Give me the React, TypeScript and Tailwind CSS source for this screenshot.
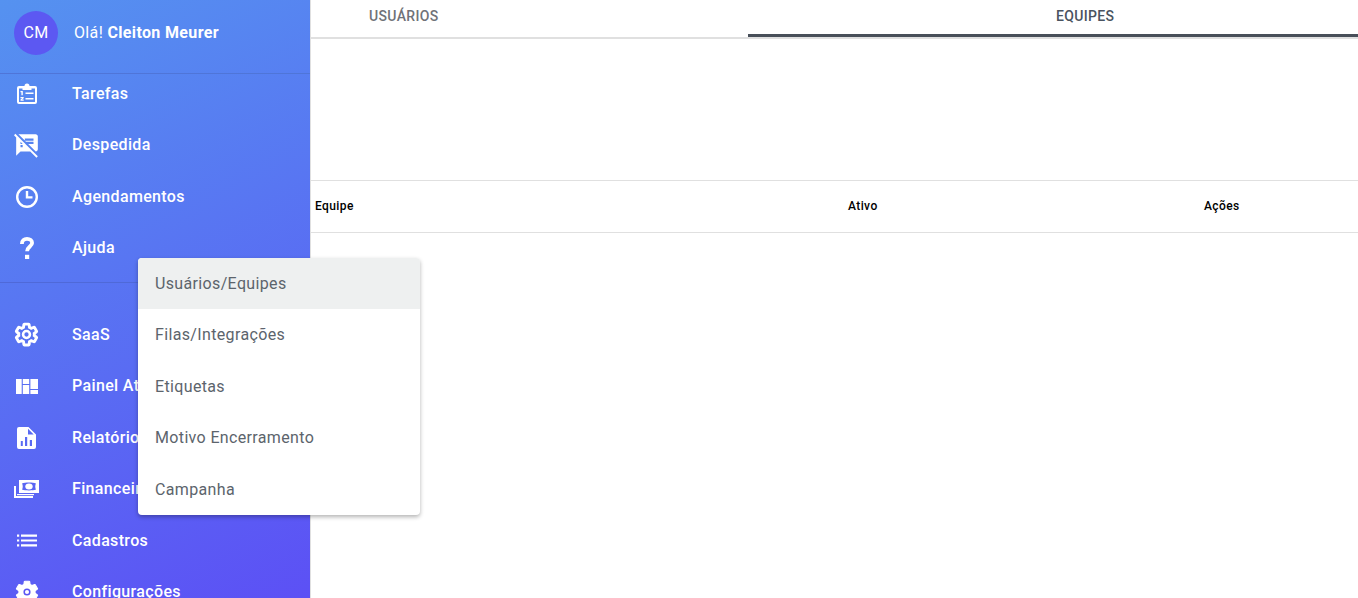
import type { ReactNode } from "react";
import { MdSpeakerNotesOff } from "react-icons/md";

const GEAR =
  "M19.43 12.98c.04-.32.07-.64.07-.98 0-.34-.03-.66-.07-.98l2.11-1.65c.19-.15.24-.42.12-.64l-2-3.46c-.09-.16-.26-.25-.44-.25-.06 0-.12.01-.17.03l-2.49 1c-.52-.4-1.08-.73-1.69-.98l-.38-2.65C14.46 2.18 14.25 2 14 2h-4c-.25 0-.46.18-.49.42l-.38 2.65c-.61.25-1.17.59-1.69.98l-2.49-1c-.06-.02-.12-.03-.18-.03-.17 0-.34.09-.43.25l-2 3.46c-.13.22-.07.49.12.64l2.11 1.65c-.04.32-.07.65-.07.98 0 .33.03.66.07.98l-2.11 1.65c-.19.15-.24.42-.12.64l2 3.46c.09.16.26.25.44.25.06 0 .12-.01.17-.03l2.49-1c.52.4 1.08.73 1.69.98l.38 2.65c.03.24.24.42.49.42h4c.25 0 .46-.18.49-.42l.38-2.65c.61-.25 1.17-.59 1.69-.98l2.49 1c.06.02.12.03.18.03.17 0 .34-.09.43-.25l2-3.46c.12-.22.07-.49-.12-.64l-2.11-1.65z";

function TasksIcon() {
  return (
    <svg viewBox="0 0 20 21" width="20" height="21" fill="#fff">
      <path
        fillRule="evenodd"
        d="M2 3h5.500a2.500 2.500 0 0 1 5 0H18a2 2 0 0 1 2 2v14a2 2 0 0 1-2 2H2a2 2 0 0 1-2-2V5a2 2 0 0 1 2-2Zm0 2.500V18.500a.5.5 0 0 0 .5.5h15a.5.5 0 0 0 .5-.5V5.500h-3.500V7h-9V5.500H2Z"
      />
      <path d="M3.500 8h2.300v4.200H4.400V9.300H3.500ZM8.500 9.500h8v1.600h-8ZM3.500 14h3.200v1.200l-1.700 1.300h1.700v1.300H3.500v-1.200l1.800-1.400H3.500ZM8.500 15h8v1.600h-8Z" />
    </svg>
  );
}

function ClockIcon() {
  return (
    <svg viewBox="0 0 22 22" width="22" height="22" fill="none" stroke="#fff" strokeWidth="2.4">
      <circle cx="11" cy="11" r="9.800" />
      <path d="M11 5v6.400h5.500" />
    </svg>
  );
}

function QuestionIcon() {
  return (
    <svg viewBox="0 0 14 22" width="14" height="22">
      <path
        d="M1.900 7C1.900 3.500 4 1.900 7 1.900c3.100 0 5.100 1.700 5.100 4.200 0 3.400-5 3.600-5 8.100"
        fill="none"
        stroke="#fff"
        strokeWidth="3.800"
      />
      <path d="M5 17.800h4.200V22H5z" fill="#fff" />
    </svg>
  );
}

function GearOutlineIcon() {
  return (
    <svg viewBox="0 0 24 24" width="25" height="25" fill="none" stroke="#fff">
      <path d={GEAR} strokeWidth="2.800" />
      <circle cx="12" cy="12" r="3.300" strokeWidth="2.500" />
    </svg>
  );
}

function GearSolidIcon() {
  return (
    <svg viewBox="0 0 24 24" width="26" height="26">
      <path d={GEAR} fill="#fff" stroke="#fff" strokeWidth="1" />
      <circle cx="12" cy="12" r="2.600" fill="none" stroke="#5b55f3" strokeWidth="1.400" />
    </svg>
  );
}

function QuiltIcon() {
  return (
    <svg viewBox="0 0 22 15" width="22" height="15" fill="#fff">
      <path d="M0 0h5.700v15H0zM6.800 0h6.400v5H6.800zM6.800 6h6.400v9H6.800zM14.400 0H22v10h-7.600zM14.400 11H22v4h-7.600z" />
    </svg>
  );
}

function ReportIcon() {
  return (
    <svg viewBox="0 0 19 22" width="19" height="22">
      <path
        fillRule="evenodd"
        fill="#fff"
        d="M2 0h9.500L19 7.500V20a2 2 0 0 1-2 2H2a2 2 0 0 1-2-2V2a2 2 0 0 1 2-2ZM11 1.800V7.500h5.700ZM3.800 14v5h2v-5ZM8 10v9h2.200v-9ZM12.800 13v6h2.200v-6Z"
      />
    </svg>
  );
}

function MoneyIcon() {
  return (
    <svg viewBox="0 0 25 18" width="25" height="18" fill="#fff">
      <path
        fillRule="evenodd"
        d="M5 0h20v13H5ZM8 3.500C9 5 9 8 8 9.500c3 1.200 11 1.200 14 0-1-1.500-1-4.500 0-6-3-1.200-11-1.200-14 0Z"
      />
      <ellipse cx="15" cy="6.500" rx="3.700" ry="3" />
      <path d="M0 6h2v10h17v2H0Z" />
      <path d="M3 14h17v1.200H3Z" />
    </svg>
  );
}

function ListIcon() {
  return (
    <svg viewBox="0 0 20 13" width="20" height="13" fill="#fff">
      <path d="M0 .5h2.200v2.200H0zM4 .5h16v2.200H4zM0 5.400h2.200v2.200H0zM4 5.400h16v2.200H4zM0 10.300h2.200v2.200H0zM4 10.300h16v2.200H4z" />
    </svg>
  );
}

const TOP_ITEMS: { label: string; icon: ReactNode }[] = [
  { label: "Tarefas", icon: <TasksIcon /> },
  { label: "Despedida", icon: <MdSpeakerNotesOff size={26} color="#fff" /> },
  { label: "Agendamentos", icon: <ClockIcon /> },
  { label: "Ajuda", icon: <QuestionIcon /> },
];

const BOTTOM_ITEMS: { label: string; icon: ReactNode }[] = [
  { label: "SaaS", icon: <GearOutlineIcon /> },
  { label: "Painel Atendimentos", icon: <QuiltIcon /> },
  { label: "Relatórios", icon: <ReportIcon /> },
  { label: "Financeiro", icon: <MoneyIcon /> },
  { label: "Cadastros", icon: <ListIcon /> },
  { label: "Configurações", icon: <GearSolidIcon /> },
];

const MENU_ITEMS = ["Usuários/Equipes", "Filas/Integrações", "Etiquetas", "Motivo Encerramento", "Campanha"];

function SideItem({ label, icon }: { label: string; icon: ReactNode }) {
  return (
    <div className="flex h-[51.5px] shrink-0 items-center">
      <span className="flex w-[53px] shrink-0 justify-center">{icon}</span>
      <span className="ml-[19px] whitespace-nowrap text-base font-medium tracking-[0.35px] text-white">{label}</span>
    </div>
  );
}

export default function App() {
  return (
    <div className="relative flex h-screen overflow-hidden bg-white font-['Roboto',sans-serif]">
      <aside className="flex w-[310px] shrink-0 flex-col bg-[linear-gradient(155deg,#5592f0,#5c50f5)]">
        <div className="flex h-[74px] shrink-0 items-center border-b border-[#4f75d8] pb-[7px] pl-[14px]">
          <div className="flex h-[44px] w-[44px] items-center justify-center rounded-full bg-[#5c58f2] text-base tracking-[0.35px] text-white">
            CM
          </div>
          <p className="ml-4 text-base tracking-[0.35px] text-white">
            Olá! <span className="font-bold">Cleiton Meurer</span>
          </p>
        </div>
        <div className="-mt-[6px] flex flex-col">
          {TOP_ITEMS.map((item) => (
            <SideItem key={item.label} {...item} />
          ))}
        </div>
        <div className="mb-[26px] mt-[8px] h-px shrink-0 bg-[#4f69d8]" />
        <div className="flex flex-col">
          {BOTTOM_ITEMS.map((item) => (
            <SideItem key={item.label} {...item} />
          ))}
        </div>
      </aside>

      <main className="min-w-0 flex-1 border-l border-[#e0e0e0]">
        <div className="flex h-[39px] border-b-2 border-[#e0e0e0] text-sm font-medium tracking-[0.35px]">
          <div className="w-[437px] pl-[58px] pt-[6px] text-[#6f7278]">USUÁRIOS</div>
          <div className="h-[37px] flex-1 border-b-[3px] border-[#484f59] pl-[308px] pt-[6px] text-[#4a5360]">EQUIPES</div>
        </div>
        <div className="mt-[141px] flex h-[53px] items-center border-y border-[#e0e0e0] pb-[2px] text-xs font-medium tracking-[0.4px] text-black">
          <span className="w-[537px] pl-1">Equipe</span>
          <span className="w-[356px]">Ativo</span>
          <span>Ações</span>
        </div>
      </main>

      <div className="absolute left-[138px] top-[258px] w-[282px] overflow-hidden rounded bg-white shadow-[0_2px_4px_rgba(0,0,0,0.3)]">
        {MENU_ITEMS.map((item, i) => (
          <div
            key={item}
            className={`flex h-[51.4px] items-center pl-[17px] pt-[0.6px] text-base tracking-[0.35px] text-[#5c646c] ${i === 0 ? "bg-[#eef0f0]" : ""}`}
          >
            {item}
          </div>
        ))}
      </div>
    </div>
  );
}
